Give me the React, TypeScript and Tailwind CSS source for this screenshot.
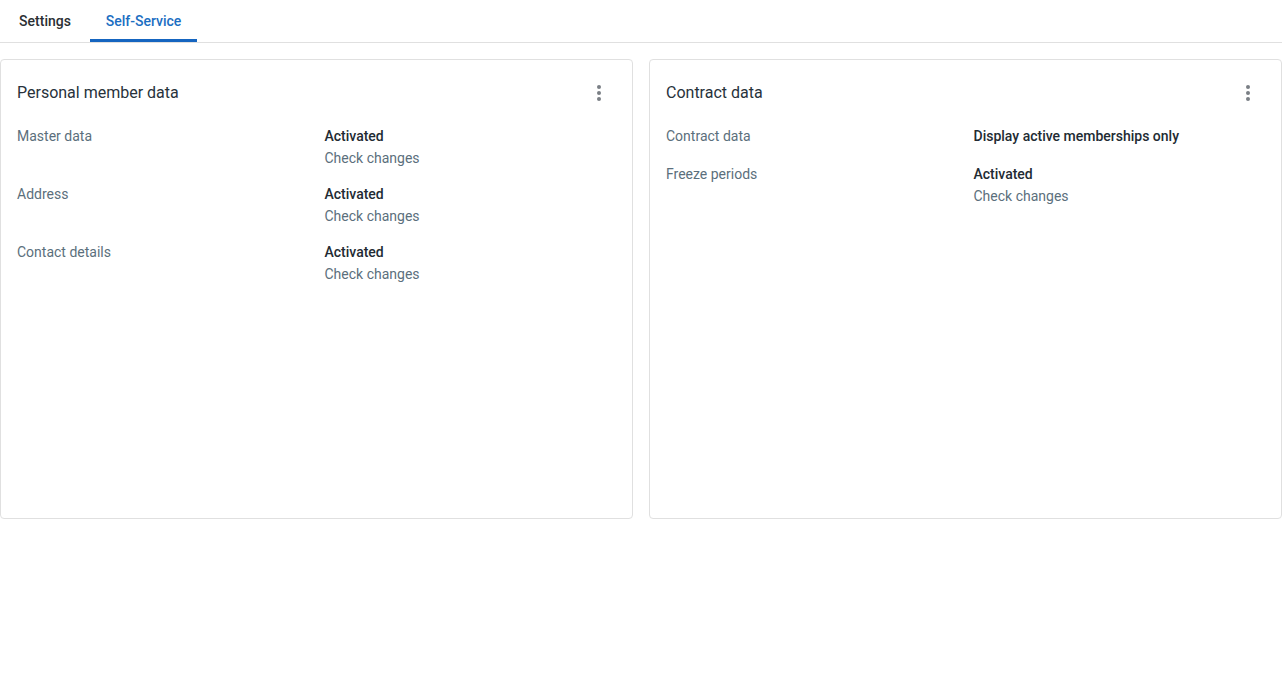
import React from "react";

interface RowProps {
  label: string;
  value: string;
  link?: string;
}

const Row: React.FC<RowProps> = ({ label, value, link }) => {
  return (
    <div className="grid grid-cols-2 gap-4 text-sm">
      <span className="leading-[22px] text-[#5b6f7c]">{label}</span>
      <span className="flex flex-col">
        <span className="leading-[22px] font-medium text-[#222b33]">{value}</span>
        {link && <span className="leading-[22px] -mb-[2px] text-[#5b6f7c]">{link}</span>}
      </span>
    </div>
  );
};

const Kebab = () => (
  <button className="w-[34px] h-8 flex items-center justify-center">
    <svg width="4" height="16" viewBox="0 0 4 16" fill="#7a7f85">
      <circle cx="2" cy="2" r="2" />
      <circle cx="2" cy="8" r="2" />
      <circle cx="2" cy="14" r="2" />
    </svg>
  </button>
);

interface CardProps {
  title: string;
  rows: RowProps[];
}

const Card: React.FC<CardProps> = ({ title, rows }) => {
  return (
    <div className="flex-1 h-[460px] border border-[#e0e0e0] rounded-[4px] bg-white p-4">
      <div className="flex items-center justify-between h-8 mt-[1px] mb-4">
        <h2 className="text-base text-[#27323b]">{title}</h2>
        <Kebab />
      </div>
      <div className="flex flex-col gap-4">
        {rows.map((r) => (
          <Row key={r.label} {...r} />
        ))}
      </div>
    </div>
  );
};

export default function App() {
  return (
    <div
      className="min-h-screen bg-white"
      style={{ fontFamily: "Roboto, 'Liberation Sans', sans-serif" }}
    >
      <div className="flex h-[43px] border-b border-[#e0e0e0] text-sm font-medium">
        <div className="w-[90px] flex items-center justify-center text-[#2a2f33] pb-[1px]">
          Settings
        </div>
        <div className="w-[107px] flex items-center justify-center text-[#1b6ec2] border-b-[3px] border-[#1565c0] pt-[2px]">
          Self-Service
        </div>
      </div>
      <div className="flex gap-4 pt-4">
        <Card
          title="Personal member data"
          rows={[
            { label: "Master data", value: "Activated", link: "Check changes" },
            { label: "Address", value: "Activated", link: "Check changes" },
            { label: "Contact details", value: "Activated", link: "Check changes" },
          ]}
        />
        <Card
          title="Contract data"
          rows={[
            { label: "Contract data", value: "Display active memberships only" },
            { label: "Freeze periods", value: "Activated", link: "Check changes" },
          ]}
        />
      </div>
    </div>
  );
}
